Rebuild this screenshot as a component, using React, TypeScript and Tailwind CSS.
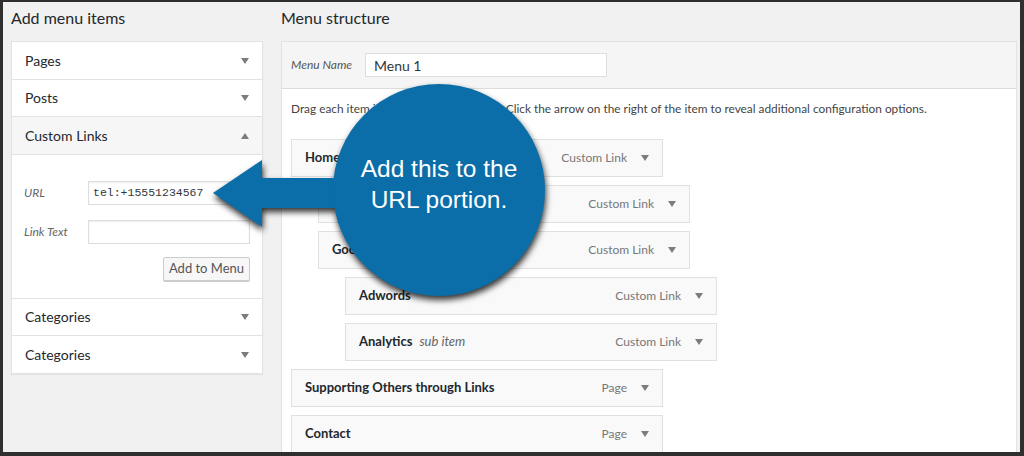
import React from "react";

const font = "font-['Lato','Noto_Sans',sans-serif]";

function Caret({ up = false }: { up?: boolean }) {
  return (
    <svg width="8" height="6" viewBox="0 0 8 6" className="shrink-0">
      <path d={up ? "M0 6 L4 0 L8 6Z" : "M0 0 L8 0 L4 6Z"} fill="#7c7c7c" />
    </svg>
  );
}

type Item = { title: string; sub?: string; type: string; level: number };

const items: Item[] = [
  { title: "Home", type: "Custom Link", level: 0 },
  { title: "About Us", type: "Custom Link", level: 1 },
  { title: "Google", type: "Custom Link", level: 1 },
  { title: "Adwords", type: "Custom Link", level: 2 },
  { title: "Analytics", sub: "sub item", type: "Custom Link", level: 2 },
  { title: "Supporting Others through Links", type: "Page", level: 0 },
  { title: "Contact", type: "Page", level: 0 },
];

const indent = ["ml-0", "ml-[27px]", "ml-[54px]"];

function SideRow({
  label,
  open = false,
  tall = false,
}: {
  label: string;
  open?: boolean;
  tall?: boolean;
}) {
  return (
    <div
      className={`flex items-center justify-between border-b border-[#e2e2e2] pl-[13px] pr-[13px] text-[14px] text-[#23282d] ${
        tall ? "h-[38px]" : "h-[37px]"
      } ${open ? "bg-[#f6f6f6]" : "bg-white"}`}
    >
      <span className="-mt-[1px]">{label}</span>
      <Caret up={open} />
    </div>
  );
}

function MenuItem({ item }: { item: Item }) {
  return (
    <div
      className={`mb-[8px] flex h-[38px] w-[372px] items-center justify-between border border-[#e0e0e0] bg-[#f9f9f9] pl-[13px] pr-[13px] ${indent[item.level]}`}
    >
      <span className="text-[13px] font-bold text-[#23282d]">
        {item.title}
        {item.sub && (
          <span className="ml-[7px] font-normal italic text-[#666]">
            {item.sub}
          </span>
        )}
      </span>
      <span className="flex items-center gap-[14px] text-[12px] text-[#777]">
        {item.type}
        <Caret />
      </span>
    </div>
  );
}

export default function App() {
  return (
    <div
      className={`relative h-[456px] w-[1024px] overflow-hidden border-b-[4px] border-l-[3px] border-r-[4px] border-t-[2px] border-[#2f2f2f] bg-[#f1f1f1] ${font}`}
    >
      <div className="flex pl-[8px]">
        {/* left column */}
        <div className="w-[252px] shrink-0">
          <div className="h-[39px] pt-[6px] text-[16px] leading-[20px] text-[#23282d]">
            Add menu items
          </div>
          <div className="border border-b-0 border-[#e2e2e2] bg-white shadow-[0_1px_1px_rgba(0,0,0,0.05)]">
            <SideRow label="Pages" tall />
            <SideRow label="Posts" />
            <SideRow label="Custom Links" open tall />
            <div className="flex h-[144px] flex-col border-b border-[#e2e2e2] px-[12px] pt-[26px]">
              <div className="flex items-center">
                <span className="w-[64px] text-[12px] italic text-[#666]">URL</span>
                <div className="flex h-[24px] w-[162px] items-center border border-[#ddd] bg-white pl-[4px] font-['Liberation_Mono',monospace] text-[11.5px] text-[#32373c] shadow-[inset_0_1px_2px_rgba(0,0,0,0.07)]">
                  tel:+15551234567
                </div>
              </div>
              <div className="mt-[15px] flex items-center">
                <span className="w-[64px] text-[12px] italic text-[#666]">Link Text</span>
                <div className="h-[24px] w-[162px] border border-[#ddd] bg-white shadow-[inset_0_1px_2px_rgba(0,0,0,0.07)]" />
              </div>
              <div className="mt-[13px] flex justify-end">
                <div className="flex h-[24px] w-[87px] items-center justify-center rounded-[2px] border border-[#cccccc] bg-[#f7f7f7] text-[13px] text-[#555] shadow-[0_1px_0_#ccc]">
                  Add to Menu
                </div>
              </div>
            </div>
            <SideRow label="Categories" />
            <SideRow label="Categories" tall />
          </div>
        </div>

        {/* right column */}
        <div className="ml-[18px] w-[736px] shrink-0">
          <div className="h-[39px] pt-[6px] text-[16px] leading-[20px] text-[#23282d]">
            Menu structure
          </div>
          <div className="border border-[#e2e2e2] bg-white">
            <div className="flex h-[47px] items-center border-b border-[#dcdcdc] bg-[#f5f5f5] pl-[9px]">
              <span className="w-[74px] text-[12px] italic text-[#555]">Menu Name</span>
              <div className="flex h-[24px] w-[242px] items-center border border-[#ddd] bg-white pl-[8px] text-[14px] text-[#32373c]">
                Menu 1
              </div>
            </div>
            <div className="h-[400px] pl-[9px] pt-[12px]">
              <p className="text-[11.85px] leading-[16px] text-[#444]">
                Drag each item into the order you prefer. Click the arrow on the right of the item to reveal additional configuration options.
              </p>
              <div className="mt-[22px]">
                {items.map((it, i) => (
                  <MenuItem key={i} item={it} />
                ))}
              </div>
            </div>
          </div>
        </div>
      </div>

      {/* callout overlay */}
      <div className="pointer-events-none absolute left-[-3px] top-[-2px] h-[456px] w-[1024px]">
        <svg width="1024" height="456" className="absolute left-0 top-0 [filter:drop-shadow(1px_4px_3px_rgba(0,0,0,0.8))]">
          <path d="M213 193 L262 160 L262 178 L380 178 L380 208 L262 208 L262 227 Z" fill="#0b6ea8" />
          <circle cx="439" cy="190" r="106" fill="#0b6ea8" />
        </svg>
        <div className="absolute left-[333px] top-[153px] w-[212px] text-center font-['Liberation_Sans',Arial,sans-serif] text-[24.5px] leading-[31px] text-white">
          Add this to the
          <br />
          URL portion.
        </div>
      </div>
    </div>
  );
}
